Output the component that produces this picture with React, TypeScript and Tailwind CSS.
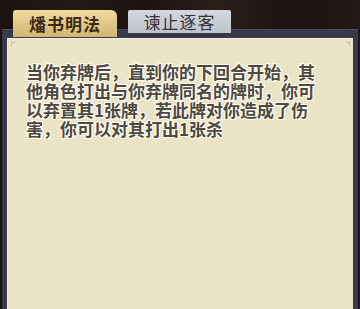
import React from 'react';

const desc =
  '当你弃牌后，直到你的下回合开始，其他角色打出与你弃牌同名的牌时，你可以弃置其1张牌，若此牌对你造成了伤害，你可以对其打出1张杀';

export default function App() {
  return (
    <div
      className="w-[360px] h-[309px] overflow-hidden flex flex-col bg-[linear-gradient(90deg,#1a1211,#241917_20%,#1b1311_40%,#2a1e1b_60%,#1c1412_80%,#221816)]"
      style={{ fontFamily: '"Noto Sans CJK SC", "Noto Sans", sans-serif' }}
    >
      {/* tabs */}
      <div className="relative z-10 flex items-start gap-[11px] pl-[13px] pt-[10px] -mb-[8px]">
        <div className="w-[104px] h-[27px] rounded-t-[3px] rounded-tr-[6px] bg-[linear-gradient(180deg,#efdba0,#dfc585_55%,#d2b570)] flex items-center justify-center text-[17px] leading-none text-[#3b2a18] tracking-[1px] font-bold">
          燔书明法
        </div>
        <div className="w-[103px] h-[23px] rounded-t-[2px] bg-[linear-gradient(180deg,#d3d7de,#bfc3cc)] flex items-center justify-center text-[17px] leading-none text-[#33343a] tracking-[1px]">
          谏止逐客
        </div>
      </div>

      {/* frame */}
      <div className="flex-1 mx-[2px] pt-[8px] px-[5px] bg-[#383a4c] border-t border-[#4a4c5e] flex flex-col">
        <div className="relative flex-1 bg-[#ebe3c6] border-t border-l border-[#f6f1df] pl-[18px] pr-[30px] pt-[23px]">
          <span className="absolute left-[3px] top-[3px] w-[4px] h-[4px] border-t border-l border-[#c9c0a2]" />
          <span className="absolute right-[3px] top-[3px] w-[4px] h-[4px] border-t border-r border-[#c9c0a2]" />
          <p
            className="text-[17px] leading-[19px] text-[#4d4942] font-bold break-all"
            style={{
              textShadow:
                '1px 0 0 #fffcee, -1px 0 0 #fffcee, 0 1px 0 #fffcee, 0 -1px 0 #fffcee, 1px 1px 0 #fffcee, -1px -1px 0 #fffcee, 1px -1px 0 #fffcee, -1px 1px 0 #fffcee',
            }}
          >
            {desc}
          </p>
        </div>
      </div>
    </div>
  );
}
